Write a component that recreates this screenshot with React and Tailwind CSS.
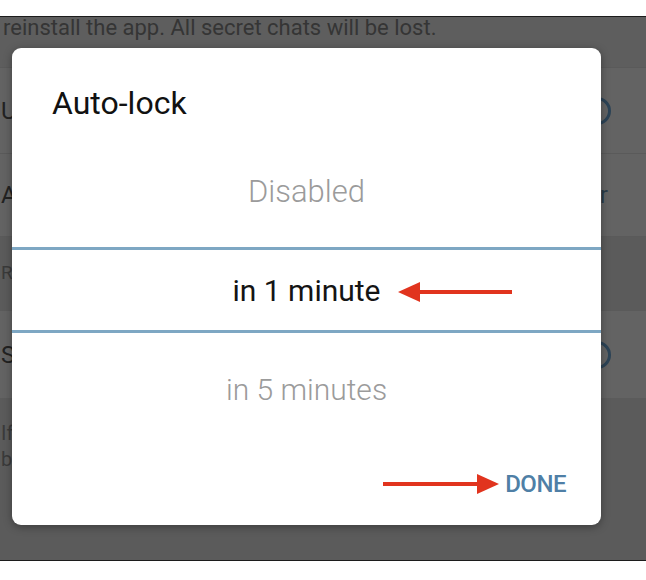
import React from 'react';

const rows = [
  { label: 'Unlock with Fingerprint', kind: 'toggle', h: 'h-[86px]' },
  { label: 'Auto-lock', kind: 'value', value: 'in 1 hour', h: 'h-[83px]' },
];

function Knob() {
  return <div className="w-7 h-7 rounded-full border-[3px] border-[#2c4356] mr-[35px]" />;
}

function Arrow({ left }) {
  // red annotation arrow, 118px long
  return (
    <svg width="120" height="26" viewBox="0 0 120 26" className="block">
      {left ? (
        <>
          <line x1="22" y1="13" x2="116" y2="13" stroke="#e1341e" strokeWidth="4" />
          <polygon points="2,13 24,3 24,23" fill="#e1341e" />
        </>
      ) : (
        <>
          <line x1="2" y1="13" x2="96" y2="13" stroke="#e1341e" strokeWidth="4" />
          <polygon points="118,13 96,3 96,23" fill="#e1341e" />
        </>
      )}
    </svg>
  );
}

function App() {
  return (
    <div className="relative w-[646px] h-[580px] bg-white overflow-hidden font-['Roboto',sans-serif]">
      <div className="h-4" />
      <div className="h-[545px] border-y border-[#1c1c1c] bg-[#5e5e5e] flex flex-col">
        <div className="h-[50px] pl-[3px] text-[22px] leading-[22px] text-[#353535]">
          reinstall the app. All secret chats will be lost.
        </div>
        <div className="bg-[#636363] border-t border-[#5a5a5a]">
          {rows.map((r, i) => (
            <div key={i} className={`${r.h} flex items-center justify-between border-b border-[#5a5a5a]`}>
              <span className="text-[24px] text-[#222] pl-[1px]">{r.label.slice(0, 1)}</span>
              {r.kind === 'toggle' ? <Knob /> : <span className="text-[24px] text-[#2a3b48] mr-[38px]">{r.value}</span>}
            </div>
          ))}
        </div>
        <div className="h-[73px] bg-[#5b5b5b] flex items-center pl-[1px] text-[19px] text-[#3a3a3a]">
          R
        </div>
        <div className="h-[88px] bg-[#636363] border-t border-[#5a5a5a] flex items-center justify-between">
          <span className="text-[24px] text-[#222] pl-[1px]">S</span>
          <Knob />
        </div>
        <div className="flex-1 bg-[#5b5b5b] pt-[22px] pl-[1px] text-[20px] leading-[26px] text-[#3a3a3a]">
          <div>If</div>
          <div>b</div>
        </div>
      </div>

      {/* dialog */}
      <div className="absolute left-[12px] top-[48px] w-[589px] h-[477px] bg-white rounded-[9px] shadow-[0_2px_8px_rgba(0,0,0,0.35)] flex flex-col">
        <div className="h-[72px] pl-10 pt-[37px] text-[32px] leading-[36px] text-[#111]">Auto-lock</div>
        <div className="h-[127px] pt-[54px] text-center text-[31px] leading-[36px] text-[#9b9b9b] font-light">Disabled</div>
        <div className="h-[86px] border-y-[3px] border-[#7ea7c3] flex items-center justify-center text-[30px] text-[#141414]">
          in 1 minute
        </div>
        <div className="pt-[39px] text-center text-[30px] leading-[36px] text-[#9b9b9b] font-light">in 5 minutes</div>
        <div className="mt-[63px] pr-[35px] flex justify-end text-[24px] leading-[26px] font-medium text-[#4f7fa6] tracking-[-0.5px]">
          DONE
        </div>
      </div>

      <div className="absolute left-[396px] top-[279px]"><Arrow left /></div>
      <div className="absolute left-[381px] top-[471px]"><Arrow /></div>
    </div>
  );
}

export default App;
